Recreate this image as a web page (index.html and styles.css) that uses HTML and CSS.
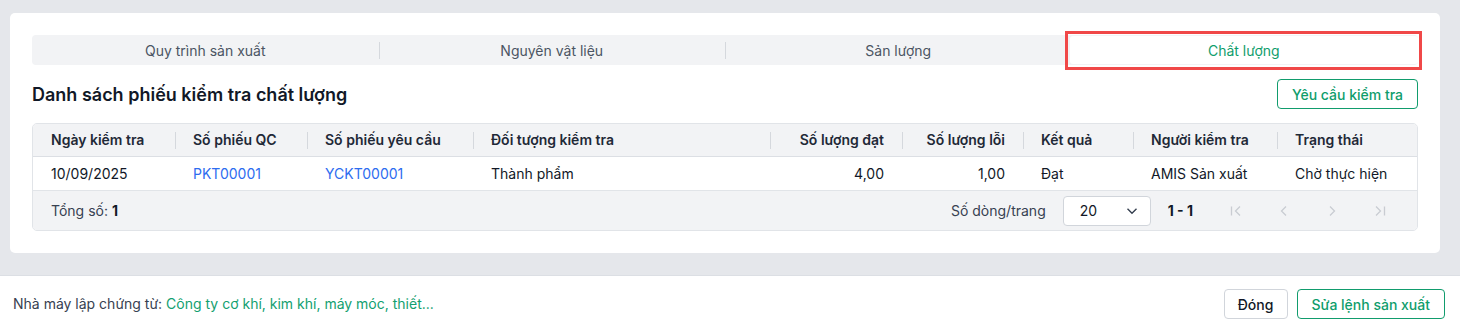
FILE: index.html
```html
<!DOCTYPE html>
<html lang="vi">
<head>
	<meta charset="UTF-8">
	<meta name="viewport" content="width=device-width, initial-scale=1.0">
	<title>Lệnh sản xuất - Chất lượng</title>
	<link rel="stylesheet" href="styles.css">
</head>
<body>
	<div class="page">
		<div class="card">
			<div class="tabs">
				<div class="tab">Quy trình sản xuất</div>
				<div class="tab">Nguyên vật liệu</div>
				<div class="tab">Sản lượng</div>
				<div class="tab active"><span>Chất lượng</span></div>
			</div>

			<div class="list-head">
				<h2>Danh sách phiếu kiểm tra chất lượng</h2>
				<button type="button" class="btn btn-outline">Yêu cầu kiểm tra</button>
			</div>

			<div class="grid">
				<table>
					<colgroup>
						<col style="width:142px">
						<col style="width:132px">
						<col style="width:166px">
						<col style="width:297px">
						<col style="width:132px">
						<col style="width:121px">
						<col style="width:110px">
						<col style="width:144px">
						<col style="width:142px">
					</colgroup>
					<thead>
						<tr>
							<th>Ngày kiểm tra</th>
							<th>Số phiếu QC</th>
							<th>Số phiếu yêu cầu</th>
							<th>Đối tượng kiểm tra</th>
							<th class="num">Số lượng đạt</th>
							<th class="num">Số lượng lỗi</th>
							<th>Kết quả</th>
							<th>Người kiểm tra</th>
							<th>Trạng thái</th>
						</tr>
					</thead>
					<tbody>
						<tr>
							<td>10/09/2025</td>
							<td><a href="#">PKT00001</a></td>
							<td><a href="#">YCKT00001</a></td>
							<td>Thành phẩm</td>
							<td class="num">4,00</td>
							<td class="num">1,00</td>
							<td>Đạt</td>
							<td>AMIS Sản xuất</td>
							<td>Chờ thực hiện</td>
						</tr>
					</tbody>
				</table>

				<div class="grid-foot">
					<div class="total">Tổng số: <b>1</b></div>
					<div class="paging">
						<span>Số dòng/trang</span>
						<div class="select">
							<span>20</span>
							<svg width="12" height="8" viewBox="0 0 12 8"><path d="M1.5 1.8 6 6.2l4.5-4.4" fill="none" stroke="#374151" stroke-width="1.4"/></svg>
						</div>
						<span class="range">1 - 1</span>
						<div class="pager">
							<span class="pg"><svg width="16" height="14" viewBox="0 0 16 14"><path d="M3.5 2.5v9" stroke="#c9ccd2" stroke-width="1.3"/><path d="M12 2.5 7.5 7l4.5 4.5" fill="none" stroke="#c9ccd2" stroke-width="1.3"/></svg></span>
							<span class="pg"><svg width="16" height="14" viewBox="0 0 16 14"><path d="M10 2.5 5.5 7l4.5 4.5" fill="none" stroke="#c9ccd2" stroke-width="1.3"/></svg></span>
							<span class="pg"><svg width="16" height="14" viewBox="0 0 16 14"><path d="M6 2.5 10.5 7 6 11.5" fill="none" stroke="#c9ccd2" stroke-width="1.3"/></svg></span>
							<span class="pg"><svg width="16" height="14" viewBox="0 0 16 14"><path d="M4 2.5 8.5 7 4 11.5" fill="none" stroke="#c9ccd2" stroke-width="1.3"/><path d="M12.5 2.5v9" stroke="#c9ccd2" stroke-width="1.3"/></svg></span>
						</div>
					</div>
				</div>
			</div>
		</div>
	</div>

	<div class="footer">
		<div class="factory">Nhà máy lập chứng từ: <span>Công ty cơ khí, kim khí, máy móc, thiết...</span></div>
		<div class="actions">
			<button type="button" class="btn btn-default">Đóng</button>
			<button type="button" class="btn btn-outline">Sửa lệnh sản xuất</button>
		</div>
	</div>
</body>
</html>
```

FILE: styles.css
```css
* {
	box-sizing: border-box;
}
body {
	margin: 0;
	background: #e5e7eb;
	font-family: Inter, "Noto Sans", sans-serif;
	font-size: 14px;
	color: #111827;
}
.page {
	padding: 13px 20px 22px 10px;
}
.card {
	background: #fff;
	border-radius: 5px;
	padding: 22px 22px 22px 22px;
}

.tabs {
	display: flex;
	background: #f2f3f5;
	border-radius: 4px;
	height: 30px;
}
.tabs .tab {
	flex: 1;
	display: flex;
	align-items: center;
	justify-content: center;
	position: relative;
	color: #4b5563;
}
.tabs .tab + .tab::before {
	content: "";
	position: absolute;
	left: 0;
	top: 7px;
	height: 17px;
	border-left: 1px solid #d5d8dd;
}
.tabs .tab.active {
	padding: 1px 0 1px 0;
	align-items: stretch;
}
.tabs .tab.active::before {
	display: none;
}
/* highlight frame around the selected tab */
.tabs .tab.active::after {
	content: "";
	position: absolute;
	left: -7px;
	right: -4px;
	top: -4px;
	bottom: -5px;
	border: 3px solid #f04848;
}
.tabs .tab.active span {
	flex: 1;
	display: flex;
	align-items: center;
	justify-content: center;
	margin-left: -2px;
	background: #fff;
	border-radius: 3px;
	color: #0f9d6c;
}

.list-head {
	display: flex;
	align-items: center;
	justify-content: space-between;
	margin-top: 14px;
	margin-bottom: 14px;
}
.list-head h2 {
	margin: 0;
	font-size: 18px;
	font-weight: 600;
	color: #111827;
}

.btn {
	height: 30px;
	padding: 0 14px;
	border-radius: 4px;
	font-family: inherit;
	font-size: 14px;
	font-weight: 500;
	background: #fff;
	cursor: pointer;
}
.btn-outline {
	border: 1px solid #119c6d;
	color: #0f9d6c;
}
.btn-default {
	border: 1px solid #d1d5db;
	color: #111827;
}

.grid {
	border: 1px solid #e1e4e8;
	border-radius: 5px;
	overflow: hidden;
}
.grid table {
	width: 100%;
	border-collapse: collapse;
	table-layout: fixed;
}
.grid th {
	height: 32px;
	background: #f2f3f5;
	font-weight: 600;
	text-align: left;
	padding: 0 18px;
	color: #1f2937;
	position: relative;
	border-bottom: 1px solid #dcdfe4;
}
.grid th + th::before {
	content: "";
	position: absolute;
	left: 0;
	top: 8px;
	height: 17px;
	border-left: 1px solid #d5d8dd;
}
.grid td {
	height: 34px;
	padding: 0 18px;
	white-space: nowrap;
}
.grid .num {
	text-align: right;
}
.grid a {
	color: #2d6cf0;
	text-decoration: none;
}

.grid-foot {
	display: flex;
	align-items: center;
	justify-content: space-between;
	height: 40px;
	background: #f2f3f5;
	border-top: 1px solid #e1e4e8;
	padding: 0 13px 0 18px;
	color: #374151;
}
.grid-foot b {
	color: #111827;
}
.paging {
	display: flex;
	align-items: center;
}
.paging .select {
	display: flex;
	align-items: center;
	justify-content: space-between;
	width: 88px;
	height: 30px;
	margin-left: 17px;
	padding: 0 12px 0 16px;
	background: #fff;
	border: 1px solid #d1d5db;
	border-radius: 4px;
	color: #111827;
}
.paging .range {
	margin-left: 17px;
	font-weight: 700;
	color: #111827;
}
.pager {
	display: flex;
	margin-left: 19px;
}
.pager .pg {
	width: 48px;
	display: flex;
	justify-content: center;
}

.footer {
	background: #fff;
	border-top: 1px solid #dcdfe4;
	height: 54px;
	padding: 13px 15px 0 13px;
	display: flex;
	justify-content: space-between;
	align-items: flex-start;
}
.footer .factory {
	color: #374151;
	line-height: 30px;
}
.footer .factory span {
	color: #12a070;
}
.footer .actions {
	display: flex;
	gap: 9px;
}
.footer .btn-default {
	width: 64px;
	padding: 0;
}
```
